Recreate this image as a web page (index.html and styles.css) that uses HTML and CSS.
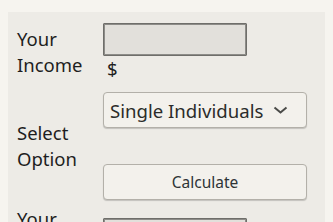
FILE: index.html
```html
<!DOCTYPE html>
<html>
<head>
<meta charset="utf-8">
<link rel="stylesheet" href="styles.css">
</head>
<body>
<div class="panel">
  <div class="form">
    <div class="label">Your<br>Income</div>
    <div class="field">
      <input class="entry" type="text">
      <div class="unit">$</div>
    </div>
    <div class="label">Select<br>Option</div>
    <div class="field stack">
      <div class="select">
        <span>Single Individuals</span>
        <svg class="chev" width="15" height="8" viewBox="0 0 15 8"><path d="M1.5 1.5 L7.5 6.5 L13.5 1.5" fill="none" stroke="#4a4b48" stroke-width="2"/></svg>
      </div>
      <button class="btn">Calculate</button>
    </div>
    <div class="label last-label">Your<br>Tax</div>
    <div class="field last">
      <input class="entry" type="text">
    </div>
  </div>
</div>
</body>
</html>
```
FILE: styles.css
```css
html, body {
  margin: 0;
  background: #f6f4ef;
}
body {
  padding: 12px 8px 0;
  font-family: "Noto Sans", "DejaVu Sans", sans-serif;
  color: #1e1e1e;
  overflow: hidden;
  height: 222px;
  box-sizing: border-box;
}
.panel {
  background: #edebe6;
  padding: 11px 0 40px 9px;
}
.form {
  display: grid;
  grid-template-columns: 86px 204px;
  row-gap: 12px;
}
.label {
  font-size: 18.5px;
  line-height: 26px;
  align-self: center;
}
.last {
  margin-top: 6px;
}
.last-label {
  align-self: start;
  margin-top: -6px;
}
.field {
  display: flex;
  flex-direction: column;
  align-items: flex-start;
}
.stack {
  gap: 36px;
}
.entry {
  width: 144px;
  height: 33px;
  box-sizing: border-box;
  margin: 0;
  border: 1px solid #6f6e6a;
  box-shadow: inset 0 0 0 1px #8d8c88;
  background: #e2e0db;
  border-radius: 1px;
}
.unit {
  font-size: 18.5px;
  line-height: 23px;
  margin-left: 4px;
  padding-top: 1px;
}
.select {
  width: 204px;
  height: 36px;
  box-sizing: border-box;
  border: 1px solid #b3b0a9;
  border-radius: 4px;
  background: #f3f1ec;
  box-shadow: 0 1px 1px rgba(0,0,0,0.18);
  display: flex;
  align-items: center;
  justify-content: space-between;
  padding: 0 18px 0 6px;
  font-size: 18.6px;
  color: #2b2c2a;
}
.chev {
  display: block;
}
.btn {
  width: 204px;
  height: 36px;
  margin: 0;
  box-sizing: border-box;
  border: 1px solid #b3b0a9;
  border-radius: 4px;
  background: #f3f1ec;
  box-shadow: 0 1px 1px rgba(0,0,0,0.18);
  font-family: "Noto Sans", "DejaVu Sans", sans-serif;
  font-size: 15.5px;
  color: #2e3436;
}
```
